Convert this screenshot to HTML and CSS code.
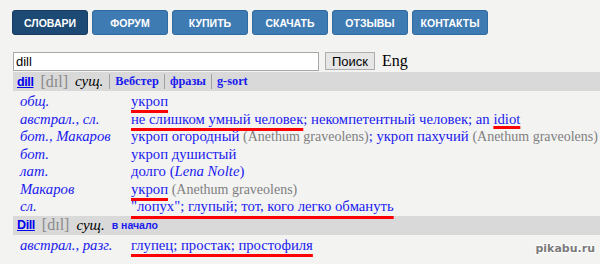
FILE: index.html
```html
<!DOCTYPE html>
<html lang="ru">
<head>
    <meta charset="UTF-8">
    <title>Multitran - dill</title>
    <link rel="stylesheet" href="styles.css">
</head>
<body>
    <div class="menu">
        <a class="menu-btn active">Словари</a>
        <a class="menu-btn">Форум</a>
        <a class="menu-btn">Купить</a>
        <a class="menu-btn">Скачать</a>
        <a class="menu-btn">Отзывы</a>
        <a class="menu-btn">Контакты</a>
    </div>

    <div class="search">
        <input type="text" class="search-input" value="dill">
        <button class="search-btn">Поиск</button>
        <span class="lang">Eng</span>
    </div>

    <div class="word-bar">
        <a class="word">dill</a>
        <span class="trans">[dɪl]</span>
        <span class="pos">сущ.</span>
        <span class="sep"></span>
        <a class="link">Вебстер</a>
        <span class="sep"></span>
        <a class="link">фразы</a>
        <span class="sep"></span>
        <a class="link">g-sort</a>
    </div>

    <div class="rows">
        <div class="subj">общ.</div>
        <div class="tr"><span class="mark">укроп</span></div>

        <div class="subj">австрал., сл.</div>
        <div class="tr"><span class="mark">не слишком умный человек</span>; некомпетентный человек; an <span class="mark mark-hi">idiot</span></div>

        <div class="subj">бот., Макаров</div>
        <div class="tr">укроп огородный <span class="note">(Anethum graveolens)</span>; укроп пахучий <span class="note">(Anethum graveolens)</span></div>

        <div class="subj">бот.</div>
        <div class="tr">укроп душистый</div>

        <div class="subj">лат.</div>
        <div class="tr">долго (<i>Lena Nolte</i>)</div>

        <div class="subj">Макаров</div>
        <div class="tr"><span class="mark">укроп</span> <span class="note">(Anethum graveolens)</span></div>

        <div class="subj">сл.</div>
        <div class="tr"><span class="mark mark-low">"лопух"; глупый; тот, кого легко обмануть</span></div>
    </div>

    <div class="word-bar">
        <a class="word">Dill</a>
        <span class="trans">[dɪl]</span>
        <span class="pos">сущ.</span>
        <a class="top-link">в начало</a>
    </div>

    <div class="rows rows-last">
        <div class="subj">австрал., разг.</div>
        <div class="tr"><span class="mark">глупец; простак; простофиля</span></div>
    </div>

    <div class="watermark">pikabu.ru</div>
</body>
</html>
```
FILE: styles.css
```css
body {
    margin: 0;
    background-color: #f3f3f2;
    font-family: "Liberation Serif", "Times New Roman", serif;
    font-size: 14.7px;
    color: #000;
    position: relative;
    height: 264px;
    overflow: hidden;
}
.menu {
    display: flex;
    gap: 4px;
    padding: 10px 0 0 12px;
}
.menu-btn {
    width: 76px;
    height: 25px;
    box-sizing: border-box;
    display: flex;
    align-items: center;
    justify-content: center;
    background-color: #3f7bb3;
    border: 1px solid #2f6aa0;
    border-radius: 3px;
    color: #fff;
    font-family: "Liberation Sans", Arial, sans-serif;
    font-weight: bold;
    font-size: 10.5px;
    text-transform: uppercase;
}
.menu-btn.active {
    background-color: #1c4a74;
    border-color: #163d61;
}
.search {
    display: flex;
    align-items: center;
    padding: 16px 0 0 13px;
    height: 20px;
}
.search-input {
    width: 306px;
    height: 19px;
    box-sizing: border-box;
    margin: 0;
    padding: 0 2px;
    border: 1px solid #a9a9a9;
    background: #fff;
    font-family: "Liberation Sans", Arial, sans-serif;
    font-size: 13px;
}
.search-btn {
    margin: 0 0 0 6px;
    width: 50px;
    height: 18px;
    padding: 0;
    border: 1px solid #adadad;
    background: #e6e6e6;
    font-family: "Liberation Sans", Arial, sans-serif;
    font-size: 13px;
    color: #000;
}
.lang {
    margin-left: 7px;
    font-size: 16px;
}
.word-bar {
    margin: 1px 0 0 13px;
    height: 19px;
    background-color: #d9d9d9;
    display: flex;
    align-items: center;
    padding-left: 4px;
    white-space: nowrap;
}
.rows + .word-bar {
    margin-top: 0;
}
.word {
    font-family: "Liberation Sans", Tahoma, sans-serif;
    font-weight: bold;
    font-size: 12.5px;
    color: #0000ee;
    text-decoration: underline;
    letter-spacing: -0.4px;
}
.trans {
    color: #8a8a8a;
    font-size: 16px;
    margin-left: 7px;
}
.pos {
    font-style: italic;
    margin-left: 7px;
    font-size: 15px;
}
.sep {
    width: 1px;
    height: 15px;
    background: #a0a0a0;
    margin: 0 5px;
}
.pos + .sep {
    margin-left: 6px;
}
.link {
    color: #1a1aee;
    font-weight: bold;
    font-size: 12.3px;
}
.top-link {
    color: #1a1aee;
    font-family: "Liberation Sans", Tahoma, sans-serif;
    font-weight: bold;
    font-size: 10.5px;
    margin-left: 7px;
}
.rows {
    display: grid;
    grid-template-columns: 111px 1fr;
    padding: 2px 0 0 20px;
    line-height: 17.5px;
    white-space: nowrap;
}
.subj {
    color: #1a1aee;
    font-style: italic;
}
.tr {
    color: #1a1aee;
}
.note {
    color: #808080;
    font-size: 14px;
}
.mark {
    text-decoration: underline;
    text-decoration-color: #f00;
    text-decoration-thickness: 3px;
    text-underline-offset: 4px;
    text-decoration-skip-ink: none;
}
.mark-hi {
    text-underline-offset: 2px;
}
.mark-low {
    text-underline-offset: 5px;
}
.watermark {
    position: absolute;
    right: 5px;
    bottom: 9px;
    font-family: "DejaVu Sans", Verdana, sans-serif;
    font-weight: bold;
    font-size: 11px;
    color: #7a7a7a;
    text-shadow: 1px 0 #fff, -1px 0 #fff, 0 1px #fff, 0 -1px #fff;
}
```
